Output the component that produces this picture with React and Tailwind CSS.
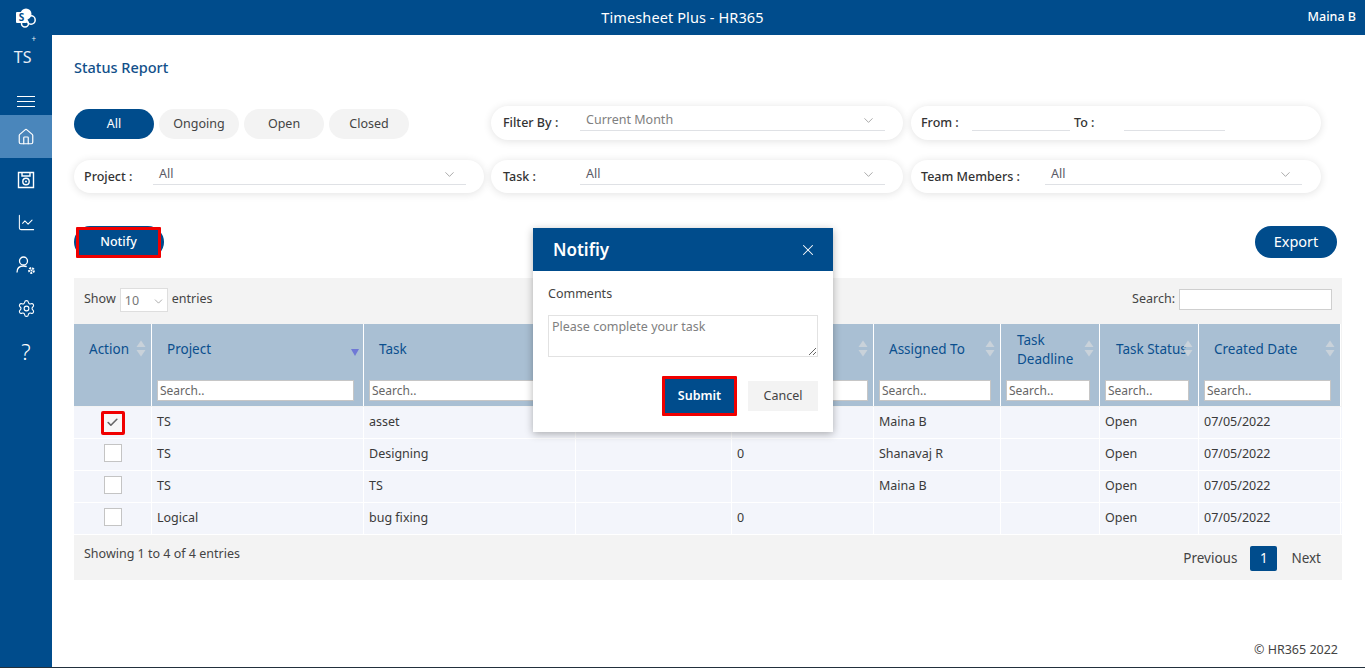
import React from "react";
import { Home, ChartLine, Settings, X, Check, ChevronDown } from "lucide-react";

const font = { };
const Sort = ({ active }) => (
  <svg width="10" height="17" viewBox="0 0 10 17" className="shrink-0">
    <path d="M5 0.5 L9.5 7 H0.5 Z" fill={active ? "#a9bfd3" : "#c9d2da"} />
    <path d="M5 16.5 L9.5 10 H0.5 Z" fill={active ? "#6f78d6" : "#c9d2da"} />
  </svg>
);

const cols = "grid grid-cols-[78px_212px_212px_156px_142px_127px_99px_99px_142px]";

function Head({ label, pl = "pl-[15px]", sort = true, search = true, inputW, two }) {
  return (
    <div className="relative h-[82px] border-r border-white bg-[#a9bfd3]">
      <div className={`h-[50px] flex items-center pt-[1px] ${pl} text-[13.5px] leading-[19px] text-[#0b4f8e] ${two ? "w-[70px]" : ""}`}>{label}</div>
      {sort && (
        <span className="absolute right-[5px] top-[16px]"><Sort /></span>
      )}
      {search && (
        <input
          readOnly
          placeholder="Search.."
          className={`absolute left-[5px] top-[56px] h-[21px] ${inputW} bg-white border border-[#c6c6c6] px-[2px] text-[12px] text-[#555] placeholder:text-[#666] outline-none`}
        />
      )}
    </div>
  );
}

function Cell({ children, className = "" }) {
  return (
    <div className={`h-[31px] flex items-center px-[5px] border-r border-white text-[12.5px] text-[#3a3a3a] ${className}`}>{children}</div>
  );
}

function Row({ checked, values }) {
  return (
    <div className={`${cols} bg-[#f3f5fb] border-b border-white h-[32px]`}>
      <Cell className="justify-center !px-0">
        {checked ? (
          <span className="relative left-[0px] flex h-[24px] w-[24px] items-center justify-center border-[3px] border-[#f00000] rounded-[2px] bg-[#f7f7f7]">
            <Check size={13} strokeWidth={3} className="text-[#666]" />
          </span>
        ) : (
          <span className="block h-[18px] w-[18px] border border-[#c4c4c4] bg-white -mt-[3px]" />
        )}
      </Cell>
      {values.map((v, i) => (
        <Cell key={i}>{v}</Cell>
      ))}
    </div>
  );
}

function Drop({ label, value, w, gray, left, chevronRight = "right-[9px]" }) {
  return (
    <div className={`flex items-start ${w} h-full`}>
      <div className={`shrink-0 ${left} pt-[8px] text-[12.5px] font-medium text-[#333] leading-[18px]`}>{label}</div>
      <div className={`relative flex-1 h-[25px] border-b border-[#dfe1e5] pl-[6px] pt-[5px] leading-[18px] text-[12.5px] ${gray ? "text-[#808080]" : "text-[#5a5a66]"}`}>
        {value}
        <ChevronDown size={15} strokeWidth={1} className={`absolute ${chevronRight} top-[7px] text-[#777]`} />
      </div>
    </div>
  );
}

const card = "h-[33px] rounded-full bg-white shadow-[0_1px_8px_rgba(0,0,0,0.12)] px-[10px] flex";

function Pill({ children, active }) {
  return (
    <div className={`w-[80px] h-[30px] rounded-full flex items-center justify-center text-[12.5px] ${active ? "bg-[#004c8c] text-white" : "bg-[#f3f3f3] text-[#444]"}`}>{children}</div>
  );
}

function SaveIcon() {
  return (
    <svg width="18" height="18" viewBox="0 0 18 18" fill="none" stroke="white" strokeWidth="1.4">
      <path d="M1.5 1.5h15v15h-15z" />
      <path d="M5 1.5v3.5h8V1.5" />
      <circle cx="9" cy="10.5" r="3.2" />
      <circle cx="9" cy="10.5" r="1" fill="white" stroke="none" />
    </svg>
  );
}

function UserGear() {
  return (
    <svg width="20" height="19" viewBox="0 0 20 19" fill="none" stroke="white" strokeWidth="1.3">
      <circle cx="7.5" cy="5" r="4" />
      <path d="M1 16.5c0-4 2.5-6.5 6.5-6.5 1.2 0 2.3.3 3.2.7" />
      <circle cx="15.5" cy="14.5" r="2.4" strokeWidth="2" strokeDasharray="1.8 0.9" />
      <circle cx="15.5" cy="14.5" r="1" fill="white" stroke="none" />
    </svg>
  );
}

function SpLogo() {
  return (
    <svg width="22" height="20" viewBox="0 0 22 20">
      <circle cx="11" cy="6" r="5.5" fill="#fff" />
      <circle cx="16" cy="12" r="4.2" fill="none" stroke="#fff" strokeWidth="1.5" />
      <circle cx="10" cy="15.5" r="3.5" fill="none" stroke="#fff" strokeWidth="1.5" />
      <rect x="1" y="4" width="11" height="11" rx="1" fill="#fff" />
      <text x="6.5" y="13" textAnchor="middle" fontSize="10" fontWeight="700" fill="#004c8c" fontFamily="'Open Sans', sans-serif">S</text>
    </svg>
  );
}

export default function App() {
  return (
    <div className="relative flex h-[668px] w-[1365px] overflow-hidden bg-white border-b border-[#22303c] font-['Noto_Sans',sans-serif]">
      <aside className="w-[52px] shrink-0 bg-[#004c8c] flex flex-col items-center text-white">
        <div className="h-[35px] flex items-center justify-center pt-[1px]"><SpLogo /></div>
        <div className="h-[44px] flex items-start justify-center pt-[10px] text-[16px] leading-[24px] text-[#e8eef5] -ml-[2px]">TS<sup className="text-[8px] -mt-[2px]">+</sup></div>
        <div className="h-[36px] w-full flex flex-col items-center gap-[4px] pt-[17px]">
          <span className="block h-px w-[18px] bg-white" />
          <span className="block h-px w-[18px] bg-white" />
          <span className="block h-px w-[18px] bg-white" />
        </div>
        <div className="h-[43px] w-full bg-[#4a86bb] flex items-center justify-center"><Home size={18} strokeWidth={1.6} /></div>
        <div className="h-[43px] flex items-center justify-center"><SaveIcon /></div>
        <div className="h-[43px] flex items-center justify-center"><ChartLine size={19} strokeWidth={1.3} /></div>
        <div className="h-[43px] flex items-center justify-center"><UserGear /></div>
        <div className="h-[43px] flex items-center justify-center"><Settings size={19} strokeWidth={1.4} /></div>
        <div className="h-[43px] flex items-center justify-center text-[22px] font-light">?</div>
      </aside>

      <div className="flex-1 flex flex-col min-w-0">
        <header className="h-[35px] shrink-0 bg-[#004c8c] text-white relative flex items-center justify-center pr-[-52px]">
          <span className="text-[14.5px] tracking-[0.1px] -ml-[52px]">Timesheet Plus - HR365</span>
          <span className="absolute right-[9px] text-[12.5px] font-medium">Maina B</span>
        </header>

        <main className="relative flex-1 pl-[22px] pr-[23px]">
          <h1 className="pt-[22px] h-[71px] text-[14.5px] leading-[20px] font-medium text-[#12508a]">Status Report</h1>

          <div className="flex h-[34px]">
            <div className="w-[417px] flex gap-[5px] pt-[3px]">
              <Pill active>All</Pill>
              <Pill>Ongoing</Pill>
              <Pill>Open</Pill>
              <Pill>Closed</Pill>
            </div>
            <div className={`${card} w-[412px] !h-[34px] pl-[12px] pr-[18px]`}>
              <Drop label="Filter By :" value="Current Month" w="w-full" gray left="w-[77px]" />
            </div>
            <div className={`${card} ml-[8px] w-[410px] !h-[34px]`}>
              <div className="pt-[8px] text-[12.5px] font-medium text-[#333] leading-[18px] w-[51px]">From :</div>
              <div className="w-[98px] h-[25px] border-b border-[#dfe1e5]" />
              <div className="pt-[8px] pl-[4px] text-[12.5px] font-medium text-[#333] leading-[18px] w-[54px]">To :</div>
              <div className="w-[101px] h-[25px] border-b border-[#dfe1e5]" />
            </div>
          </div>

          <div className="flex h-[33px] mt-[20px]">
            <div className={`${card} w-[410px] pr-[18px]`}>
              <Drop label="Project :" value="All" w="w-full" left="w-[69px]" />
            </div>
            <div className={`${card} ml-[7px] w-[412px] pl-[12px] pr-[18px]`}>
              <Drop label="Task :" value="All" w="w-full" left="w-[77px]" />
            </div>
            <div className={`${card} ml-[8px] w-[410px] pr-[19px]`}>
              <Drop label="Team Members :" value="All" w="w-full" left="w-[124px]" />
            </div>
          </div>

          <div className="flex justify-between mt-[33px] h-[32px] items-start pr-[5px]">
            <div className="relative w-[90px] h-[32px] rounded-full bg-[#004c8c]">
              <div className="absolute left-[2px] top-[1px] w-[85px] h-[31px] border-[3px] border-[#f00000] bg-[#004c8c] flex items-center justify-center text-[12.5px] text-white font-medium rounded-[1px]">Notify</div>
            </div>
            <div className="w-[82px] h-[32px] rounded-full bg-[#004c8c] text-white text-[14.5px] flex items-center justify-center">Export</div>
          </div>

          <section className="mt-[20px] h-[302px] w-[1268px] bg-[#f3f3f3]">
            <div className="h-[46px] flex items-center justify-between pl-[10px] pr-[10px] text-[12.5px] text-[#444]">
              <div className="flex items-center gap-[4px] -mt-[3px]">
                <span>Show</span>
                <span className="relative block w-[48px] h-[24px] bg-white border border-[#dedede] pl-[4px] leading-[23px] text-[12.5px] text-[#777]">
                  10
                  <ChevronDown size={13} strokeWidth={1} className="absolute right-[2px] top-[6px] text-[#666]" />
                </span>
                <span>entries</span>
              </div>
              <div className="flex items-center gap-[4px] -mt-[3px]">
                <span>Search:</span>
                <input readOnly className="w-[153px] h-[21px] bg-white border border-[#cfcfcf] outline-none" />
              </div>
            </div>

            <div className={cols}>
              <Head label="Action" search={false} />
              <div className="relative">
                <Head label="Project" sort={false} inputW="w-[197px]" />
                <span className="absolute right-[5px] top-[25px] block w-0 h-0 border-l-[4px] border-r-[4px] border-t-[7px] border-l-transparent border-r-transparent border-t-[#6f78d6]" />
              </div>
              <Head label="Task" sort={false} inputW="w-[197px]" />
              <Head label="" sort={false} search={false} />
              <Head label="" inputW="w-[131px]" />
              <Head label="Assigned To" inputW="w-[112px]" />
              <Head label={<span>Task<br />Deadline</span>} pl="pl-[16px]" two inputW="w-[84px]" />
              <Head label="Task Status" pl="pl-[16px]" inputW="w-[84px]" />
              <Head label="Created Date" inputW="w-[127px]" />
            </div>
            <div className="h-px" />
            <Row checked values={["TS", "asset", "", "", "Maina B", "", "Open", "07/05/2022"]} />
            <Row values={["TS", "Designing", "", "0", "Shanavaj R", "", "Open", "07/05/2022"]} />
            <Row values={["TS", "TS", "", "", "Maina B", "", "Open", "07/05/2022"]} />
            <Row values={["Logical", "bug fixing", "", "0", "", "", "Open", "07/05/2022"]} />

            <div className="flex justify-between pl-[10px] pr-[21px] text-[12.5px] text-[#444]">
              <span className="pt-[10px]">Showing 1 to 4 of 4 entries</span>
              <div className="flex items-center pt-[11px] text-[13.5px]">
                <span>Previous</span>
                <span className="ml-[13px] mr-[14px] flex h-[25px] w-[27px] items-center justify-center rounded-[2px] bg-[#004c8c] text-white">1</span>
                <span>Next</span>
              </div>
            </div>
          </section>

          <div className="absolute right-[27px] bottom-[7px] text-[12.5px] text-[#444]">© HR365 2022</div>

          <div className="absolute left-[481px] top-[193px] w-[300px] h-[204px] bg-white shadow-[0_2px_8px_rgba(0,0,0,0.3)] flex flex-col">
            <div className="h-[43px] bg-[#004c8c] flex items-center justify-between pl-[20px] pr-[16px] text-white">
              <span className="text-[17px] font-semibold">Notifiy</span>
              <X size={18} strokeWidth={1.4} />
            </div>
            <div className="px-[15px] pt-[14px] flex-1">
              <div className="text-[12.5px] text-[#444] leading-[18px]">Comments</div>
              <textarea
                readOnly
                placeholder="Please complete your task"
                className="mt-[12px] block w-[270px] h-[42px] border border-[#e2e2e2] px-[3px] py-[2px] text-[12.5px] leading-[18px] text-[#777] placeholder:text-[#808080] outline-none"
              />
              <div className="flex justify-end items-center gap-[11px] mt-[19px]">
                <div className="w-[75px] h-[40px] border-[3px] border-[#f00000] rounded-[1px] bg-[#004c8c] text-white text-[12.5px] font-semibold flex items-center justify-center">Submit</div>
                <div className="w-[70px] h-[30px] bg-[#f3f3f3] text-[#444] text-[12.5px] flex items-center justify-center">Cancel</div>
              </div>
            </div>
          </div>
        </main>
      </div>
    </div>
  );
}
